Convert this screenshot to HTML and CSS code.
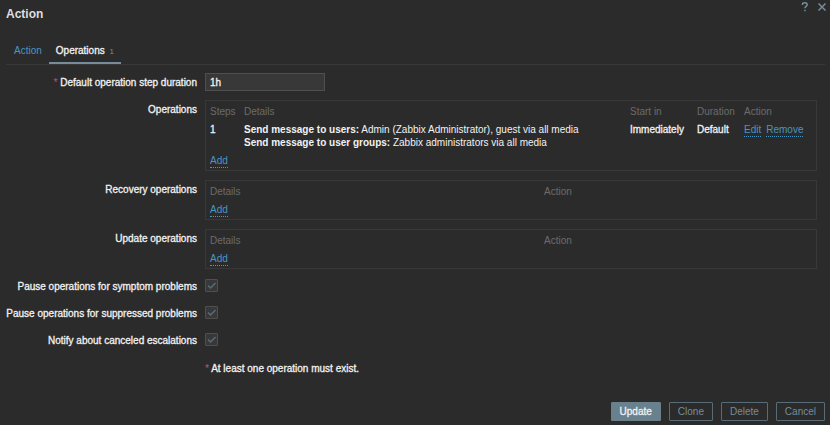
FILE: index.html
```html
<!DOCTYPE html>
<html lang="en">
<head>
<meta charset="utf-8">
<title>Action</title>
<link rel="stylesheet" href="styles.css">
</head>
<body>
<main class="dialog">
  <header class="dialog-head">
    <h1>Action</h1>
    <div class="head-tools">
      <button class="icon-button" type="button" aria-label="Help"><svg width="8" height="10" viewBox="0 0 8 10"><path d="M1.500 3V2.200C1.500 1.200 2.500.8 3.800.8S6.200 1.400 6.200 2.600C6.200 4.300 3.900 4.300 3.900 6.200M3.900 7.800V9.200"/></svg></button>
      <button class="icon-button" type="button" aria-label="Close"><svg width="10" height="10" viewBox="0 0 10 10"><path d="M1.500 1.500L8.500 8.500M8.500 1.500L1.500 8.500"/></svg></button>
    </div>
  </header>
  <nav class="tabs">
    <a class="tab" href="#action">Action</a>
    <a class="tab active" href="#operations">Operations <span class="count">1</span></a>
  </nav>
  <form class="form">
    <label class="label" for="duration"><span class="star">*</span> Default operation step duration</label>
    <div><input class="text" id="duration" type="text" value="1h"></div>

    <div class="label">Operations</div>
    <div class="box">
      <table>
        <thead>
          <tr><th class="steps">Steps</th><th>Details</th><th class="start">Start in</th><th class="duration">Duration</th><th class="actions">Action</th></tr>
        </thead>
        <tbody>
          <tr class="operation">
            <td class="strong">1</td>
            <td><b>Send message to users:</b> Admin (Zabbix Administrator), guest via all media<br><b>Send message to user groups:</b> Zabbix administrators via all media</td>
            <td class="strong">Immediately</td>
            <td class="strong">Default</td>
            <td><div class="links"><a class="link" href="#edit">Edit</a><a class="link" href="#remove">Remove</a></div></td>
          </tr>
          <tr><td colspan="5"><div class="links"><a class="link" href="#add">Add</a></div></td></tr>
        </tbody>
      </table>
    </div>

    <div class="label">Recovery operations</div>
    <div class="box">
      <table>
        <thead><tr><th>Details</th><th class="simple-action">Action</th></tr></thead>
        <tbody><tr><td colspan="2"><div class="links"><a class="link" href="#add-recovery">Add</a></div></td></tr></tbody>
      </table>
    </div>

    <div class="label">Update operations</div>
    <div class="box">
      <table>
        <thead><tr><th>Details</th><th class="simple-action">Action</th></tr></thead>
        <tbody><tr><td colspan="2"><div class="links"><a class="link" href="#add-update">Add</a></div></td></tr></tbody>
      </table>
    </div>

    <label class="label check-label" for="symptom">Pause operations for symptom problems</label>
    <div class="check"><input id="symptom" type="checkbox" checked><svg width="13" height="13" viewBox="0 0 13 13"><path d="M3 6.500L5.500 9L10.500 4"/></svg></div>
    <label class="label check-label" for="suppressed">Pause operations for suppressed problems</label>
    <div class="check"><input id="suppressed" type="checkbox" checked><svg width="13" height="13" viewBox="0 0 13 13"><path d="M3 6.500L5.500 9L10.500 4"/></svg></div>
    <label class="label check-label" for="notify">Notify about canceled escalations</label>
    <div class="check"><input id="notify" type="checkbox" checked><svg width="13" height="13" viewBox="0 0 13 13"><path d="M3 6.500L5.500 9L10.500 4"/></svg></div>

    <div class="note"><span class="star">*</span> At least one operation must exist.</div>
  </form>
  <footer class="buttons">
    <button class="button primary" type="button">Update</button>
    <button class="button" type="button">Clone</button>
    <button class="button" type="button">Delete</button>
    <button class="button" type="button">Cancel</button>
  </footer>
</main>
</body>
</html>
```
FILE: styles.css
```css
* {
  box-sizing: border-box;
}

body {
  margin: 0;
  background: #2b2b2b;
  color: #f2f2f2;
  font: 10px/13px "Liberation Sans", Arial, sans-serif;
}

.dialog {
  display: flex;
  flex-direction: column;
  min-height: 100vh;
  padding: 2px 0 4px;
}

.dialog-head {
  display: flex;
  justify-content: space-between;
  align-items: flex-start;
  padding: 0 3px 0 6px;
}

h1 {
  margin: 4px 0 0;
  font-size: 12px;
  line-height: 16px;
  color: #dedede;
}

.head-tools {
  display: flex;
  gap: 8px;
}

.icon-button {
  display: flex;
  padding: 0;
  border: 0;
  background: none;
}

svg {
  fill: none;
  stroke: #768d99;
  stroke-width: 1.5;
}

.tabs {
  display: flex;
  margin: 19px 5px 0 6px;
  padding-left: 1px;
  border-bottom: 1px solid #383838;
}

.tab {
  padding: 3px 7px 4px;
  border-bottom: 2px solid transparent;
  color: #4796c4;
  text-decoration: none;
}

.tab.active {
  border-color: #768d99;
  color: #f2f2f2;
  -webkit-text-stroke: 0.3px;
}

.count {
  margin-left: 2px;
  font-size: 8px;
  color: #768d99;
  -webkit-text-stroke: 0;
}

.form {
  display: grid;
  grid-template-columns: 191px minmax(0, 1fr);
  column-gap: 8px;
  row-gap: 9px;
  margin: 8px 13px 0 6px;
}

.label,
.strong,
.note,
.text {
  -webkit-text-stroke: 0.3px;
}

.label {
  padding-top: 3px;
  text-align: right;
  white-space: nowrap;
}

.star {
  color: #d64e4e;
  -webkit-text-stroke: 0;
}

.text {
  display: block;
  width: 120px;
  height: 18px;
  padding: 0 4px;
  border: 1px solid #4f4f4f;
  background: #383838;
  color: #f2f2f2;
  font-family: inherit;
  font-size: 10px;
}

.box {
  padding: 4px 4px 2px;
  border: 1px solid #383838;
}

table {
  width: 100%;
  table-layout: fixed;
  border-collapse: collapse;
}

th,
td {
  padding: 0;
  text-align: left;
  vertical-align: top;
}

th {
  padding-bottom: 5px;
  font-weight: normal;
  color: #6b6b6b;
}

.steps {
  width: 34px;
}

.start {
  width: 67px;
}

.duration {
  width: 47px;
}

.actions {
  width: 68px;
}

.operation td {
  padding-bottom: 5px;
}

.simple-action {
  width: 268px;
}

.links {
  display: flex;
  gap: 5px;
}

.link {
  border-bottom: 1px dotted #4796c4;
  color: #4796c4;
  text-decoration: none;
}

.label.check-label {
  height: 18px;
  padding-top: 2px;
}

.check {
  display: grid;
  justify-content: start;
  align-content: start;
  height: 18px;
  padding-top: 1px;
}

.check input,
.check svg {
  grid-area: 1 / 1;
  width: 13px;
  height: 13px;
  margin: 0;
}

.check input {
  appearance: none;
  border: 1px solid #4f4f4f;
  border-radius: 1px;
  background: #383838;
}

.check svg {
  stroke: #586c78;
  pointer-events: none;
}

.note {
  grid-column: 2;
  padding-top: 3px;
}

.buttons {
  display: flex;
  justify-content: flex-end;
  gap: 8px;
  margin-top: auto;
  padding: 0 5px;
}

.button {
  height: 19px;
  padding: 0 8px;
  border: 1px solid #586c78;
  border-radius: 1px;
  background: none;
  color: #768d99;
  font: inherit;
}

.button.primary {
  border-color: #69808d;
  background: #69808d;
  color: #f2f2f2;
  -webkit-text-stroke: 0.3px;
}
```
